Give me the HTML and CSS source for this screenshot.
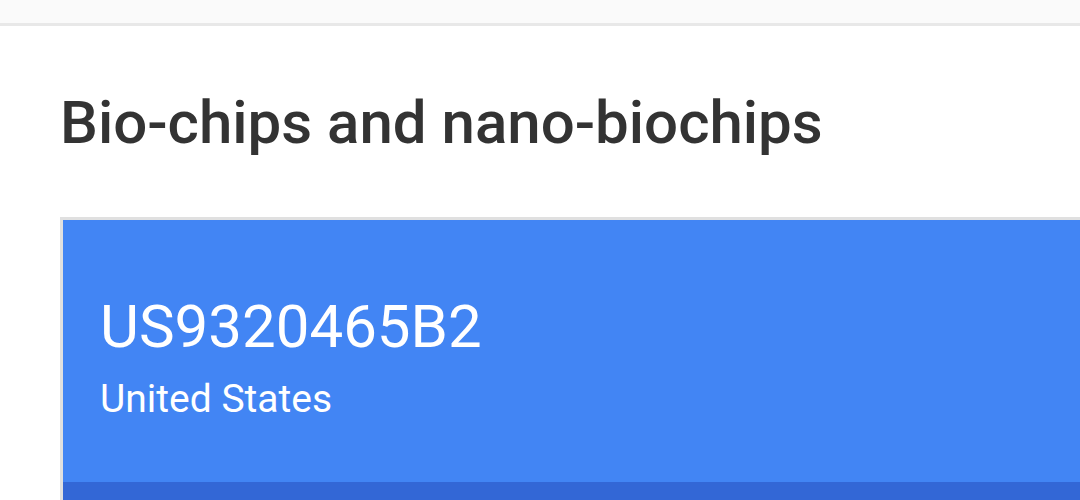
FILE: index.html
```html
<!DOCTYPE html>
<html lang="en">

<head>
    <meta charset="UTF-8">
    <meta name="viewport" content="width=device-width, initial-scale=1.0">
    <title>Bio-chips and nano-biochips</title>
    <link rel="stylesheet" href="styles.css">
</head>

<body>
    <div class="topbar"></div>
    <div class="page">
        <h1 class="title">Bio-chips and nano-biochips</h1>
        <div class="card">
            <div class="card-head">
                <div class="patent-no">US9320465B2</div>
                <div class="country">United States</div>
            </div>
            <div class="card-bar"></div>
        </div>
    </div>
</body>

</html>
```
FILE: styles.css
```css
html,
body {
    margin: 0;
    padding: 0;
    background: #fff;
    font-family: Roboto, "Liberation Sans", sans-serif;
    overflow: hidden;
}

.topbar {
    height: 23px;
    background: #fafafa;
    border-bottom: 3px solid #e8e8e8;
}

.page {
    padding: 0 0 0 60px;
}

.title {
    margin: 0;
    padding: 62px 0 0 0;
    font-size: 60px;
    line-height: 70px;
    font-weight: 500;
    color: #333;
}

.card {
    margin-top: 59px;
    width: 1100px;
    border-top: 3px solid #e0e0e0;
    border-left: 3px solid #e0e0e0;
}

.card-head {
    background: #4285f4;
    color: #fff;
    padding: 72px 0 0 37px;
    height: 262px;
    box-sizing: border-box;
}

.patent-no {
    font-size: 60px;
    line-height: 70px;
}

.country {
    font-size: 39px;
    line-height: 46px;
    margin-top: 14px;
}

.card-bar {
    height: 40px;
    background: #3367d6;
}
```
